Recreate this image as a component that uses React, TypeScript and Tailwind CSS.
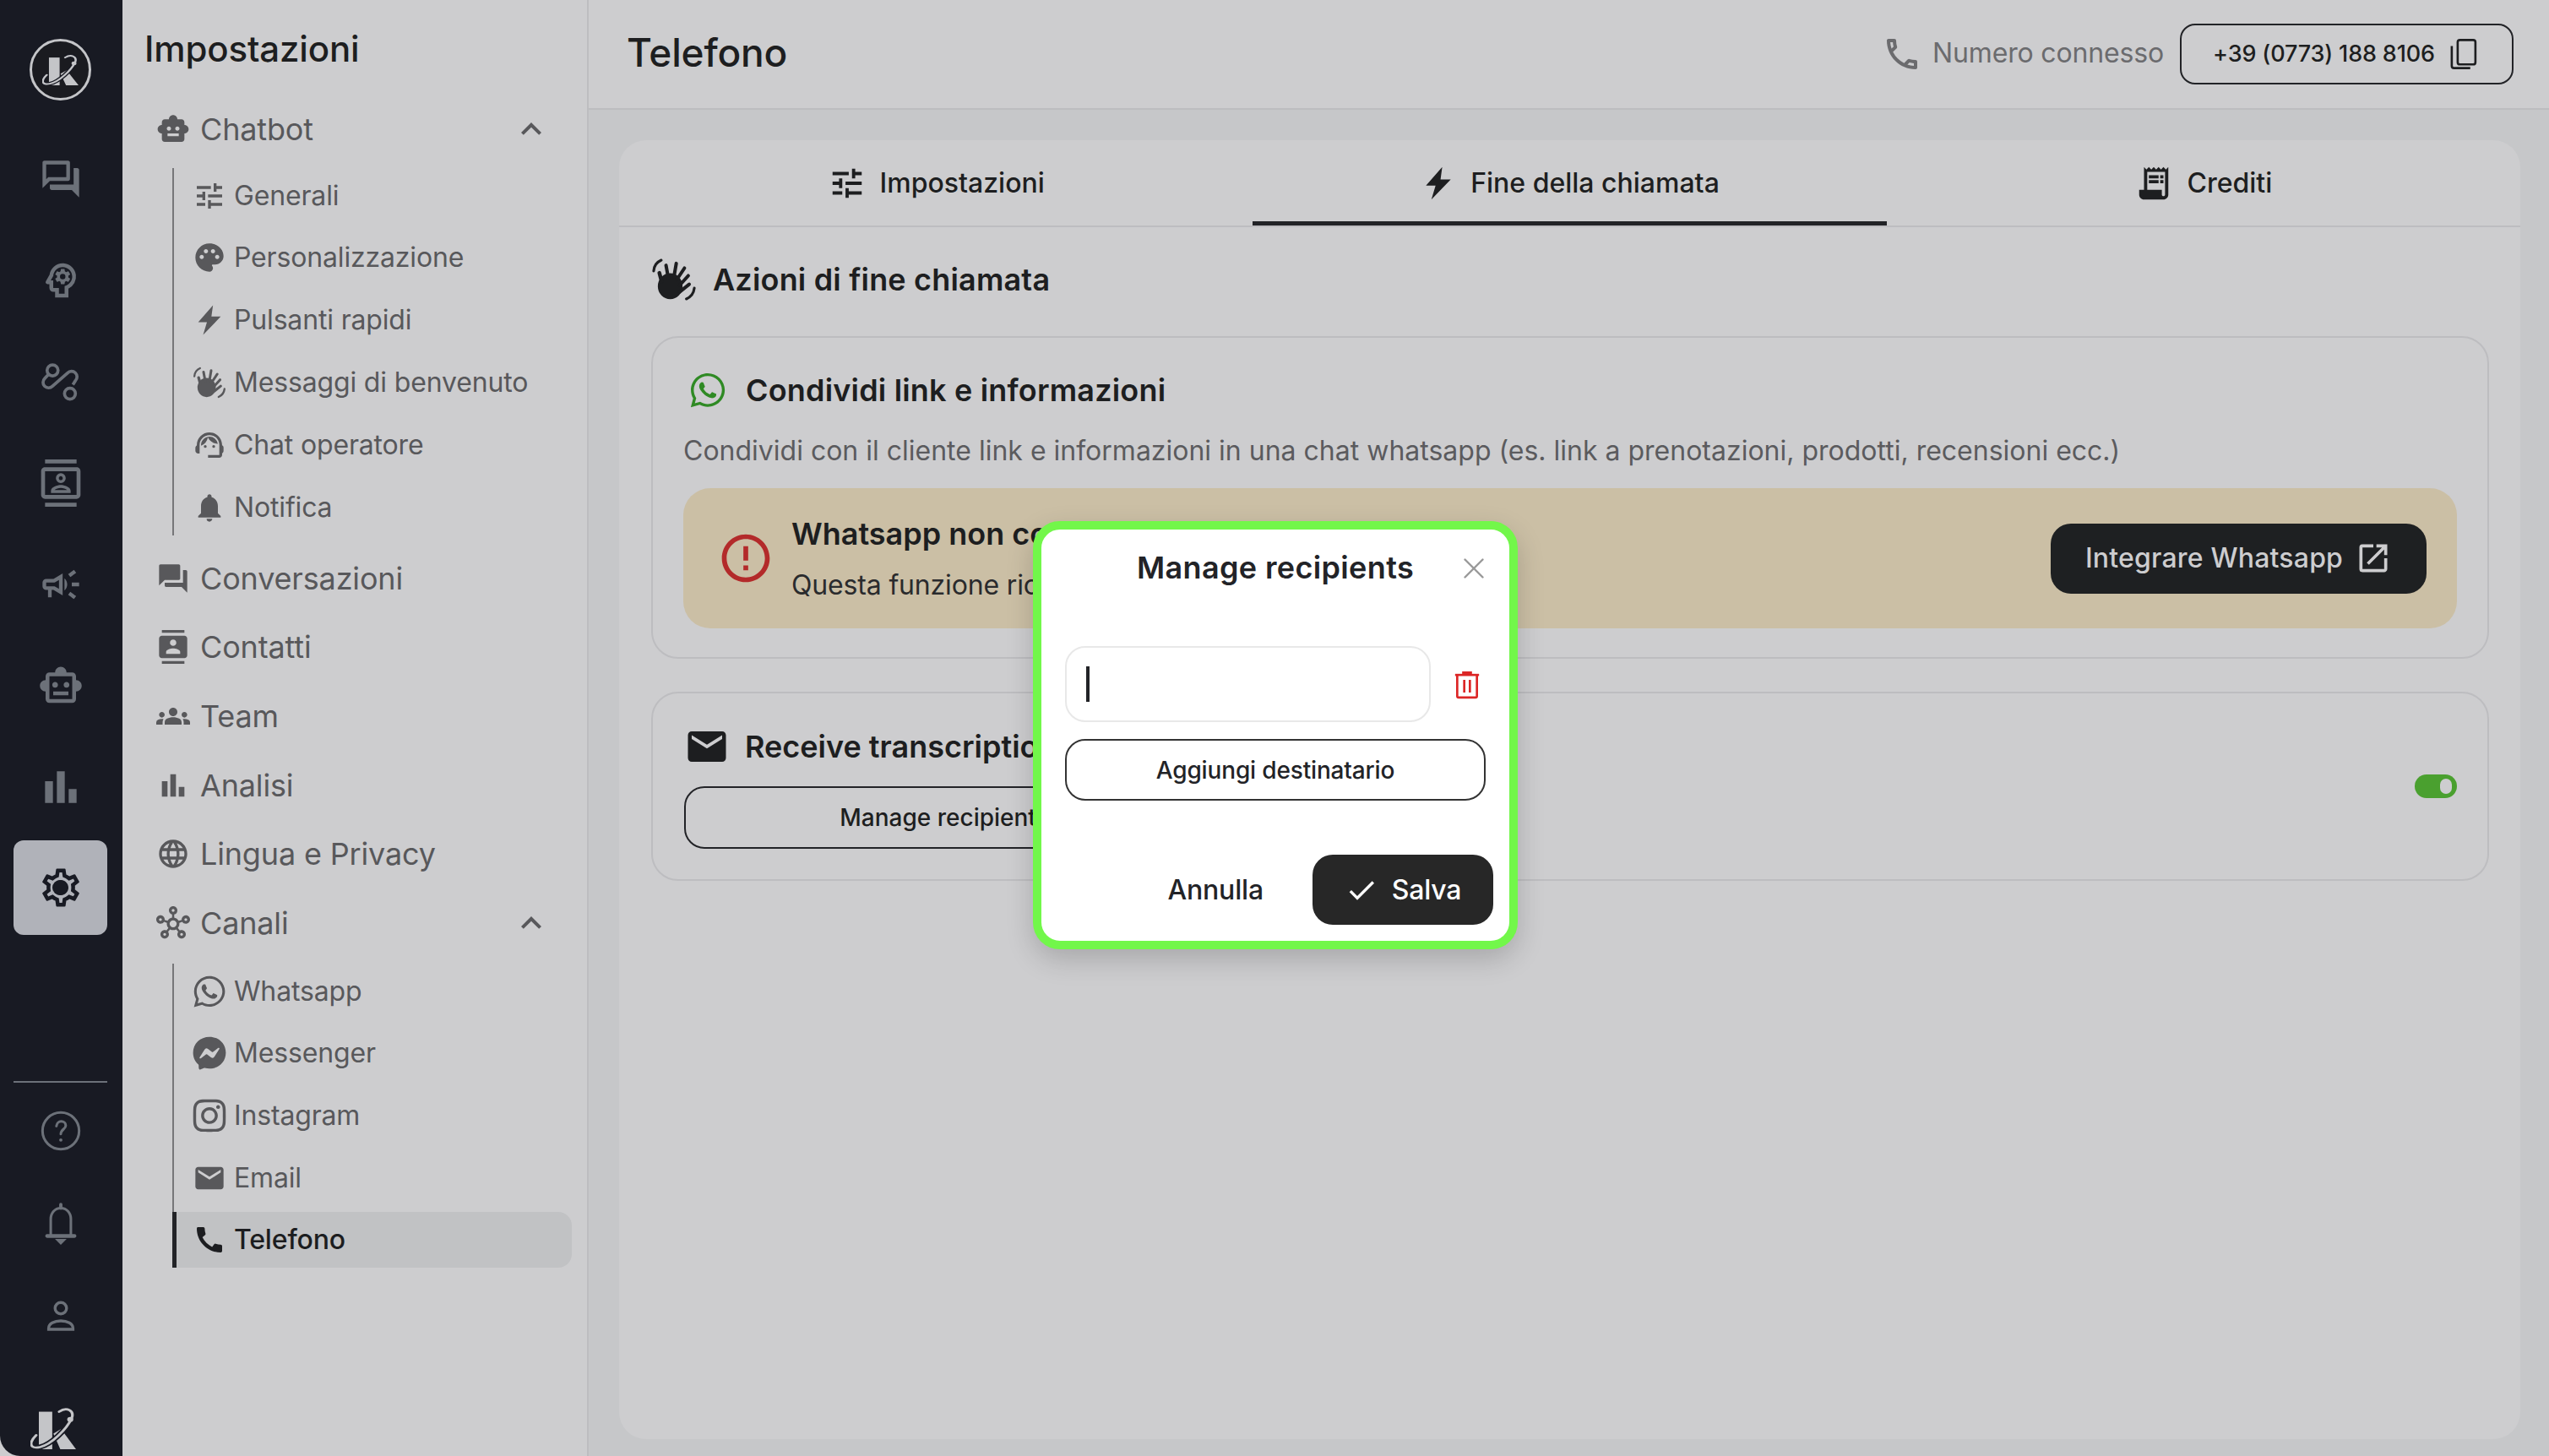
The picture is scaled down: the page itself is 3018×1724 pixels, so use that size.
import type { ReactNode } from "react";
import {
  MdBarChart,
  MdCall,
  MdCheck,
  MdContacts,
  MdEmail,
  MdErrorOutline,
  MdExpandLess,
  MdForum,
  MdGroups,
  MdLanguage,
  MdNotifications,
  MdOutlineCall,
  MdOutlineCampaign,
  MdOutlineContacts,
  MdOutlineForum,
  MdOutlineHub,
  MdOutlineOpenInNew,
  MdOutlinePsychology,
  MdOutlineSettings,
  MdOutlineSmartToy,
  MdOutlineSupportAgent,
  MdOutlineTune,
  MdPalette,
  MdReceiptLong,
  MdSmartToy,
} from "react-icons/md";
import { FaFacebookMessenger, FaInstagram, FaWhatsapp } from "react-icons/fa";
import { X } from "lucide-react";

const orbit = "M15 90C-5 115-2 135 25 128 55 120 95 70 108 35 115 12 95-2 75 15";

function KLogo({ className }: { className?: string }) {
  return (
    <svg viewBox="0 0 119 135" preserveAspectRatio="none" className={className} fill="none">
      <path d="M22 15H57V135H22z" fill="#c4c5c8" />
      <path d="M60 85 80 70 119 135H78z" fill="#c4c5c8" />
      <path d={orbit} stroke="#181a23" strokeWidth="16" />
      <path d={orbit} stroke="#c4c5c8" strokeWidth="7" strokeLinecap="round" />
      <circle cx="104" cy="40" r="8" fill="#c4c5c8" />
    </svg>
  );
}

function BoltIcon({ size }: { size: number }) {
  return (
    <svg viewBox="0 0 24 24" width={size} height={size} fill="currentColor">
      <path d="M14.5 1.500 4 13.500h6.200L7.500 22.500 20 9.500h-6.600z" />
    </svg>
  );
}

function WaveIcon({ size }: { size: number }) {
  return (
    <svg
      viewBox="0 0 24 24"
      width={size}
      height={size}
      fill="none"
      stroke="currentColor"
      strokeLinecap="round"
    >
      <path d="M1.300 7.500C1.500 5 3 2.800 5.300 1.800" strokeWidth="1.400" />
      <path d="M22.700 16.500c-.3 2.600-1.900 4.700-4.200 5.700" strokeWidth="1.400" />
      <ellipse cx="10" cy="15.500" rx="6.500" ry="6.800" fill="currentColor" stroke="none" />
      <path d="M5.500 13 4.300 8.500" strokeWidth="2" />
      <path d="M9 11 7.800 4.500" strokeWidth="1.800" />
      <path d="M12 10.500l1.200-7" strokeWidth="1.800" />
      <path d="M13.500 12l4-6" strokeWidth="1.800" />
      <path d="M15 15l4.500-5" strokeWidth="1.800" />
      <path d="M15 18.500l5-4" strokeWidth="1.800" />
    </svg>
  );
}

function PathIcon({ size }: { size: number }) {
  return (
    <svg
      viewBox="0 0 24 24"
      width={size}
      height={size}
      fill="none"
      stroke="currentColor"
      strokeWidth="1.700"
    >
      <circle cx="7.500" cy="5.800" r="3" />
      <circle cx="17" cy="18.500" r="3" />
      <path d="M5.300 8 3.200 10.200a3 3 0 0 0 4.200 4.300l8.300-7.300a3 3 0 0 1 4.300 4.200L18.600 13.600" />
    </svg>
  );
}

function HelpIcon({ size }: { size: number }) {
  return (
    <svg
      viewBox="0 0 24 24"
      width={size}
      height={size}
      fill="none"
      stroke="currentColor"
      strokeWidth="1.400"
      strokeLinecap="round"
    >
      <circle cx="12" cy="12" r="10" />
      <path d="M9.600 9.400c.2-1.600 1.300-2.600 2.600-2.600 1.400 0 2.500 1 2.500 2.300 0 2-2.600 2-2.700 4.600" />
      <circle cx="12" cy="17" r=".9" fill="currentColor" stroke="none" />
    </svg>
  );
}

function BellIcon({ size }: { size: number }) {
  return (
    <svg
      viewBox="0 0 24 24"
      width={size}
      height={size}
      fill="none"
      stroke="currentColor"
      strokeWidth="1.400"
      strokeLinecap="round"
    >
      <path d="M6.500 18.500v-9c0-3.400 2.300-6 5.500-6s5.500 2.600 5.500 6v9" />
      <path d="M4.500 18.700h15" strokeWidth="2" />
      <path d="M12 1.500v2" strokeWidth="1.800" />
      <path d="M10.500 21h3L12 22.500z" fill="currentColor" />
    </svg>
  );
}

function UserIcon({ size }: { size: number }) {
  return (
    <svg
      viewBox="0 0 24 24"
      width={size}
      height={size}
      fill="none"
      stroke="currentColor"
      strokeWidth="1.700"
    >
      <circle cx="12" cy="7" r="3.400" />
      <path d="M4.800 19.500v-.6c0-2.800 3.400-4.400 7.200-4.400s7.200 1.600 7.200 4.400v.6z" />
    </svg>
  );
}

function CopyIcon({ size }: { size: number }) {
  return (
    <svg
      viewBox="0 0 24 24"
      width={size}
      height={size}
      fill="none"
      stroke="currentColor"
      strokeWidth="1.500"
    >
      <rect x="8.500" y="2.500" width="12" height="16.500" rx="1.500" />
      <path d="M4.500 6.500v13.500a1.500 1.500 0 0 0 1.500 1.500h11" />
    </svg>
  );
}

function TrashIcon({ size }: { size: number }) {
  return (
    <svg
      viewBox="0 0 24 24"
      width={size}
      height={size}
      fill="none"
      stroke="currentColor"
      strokeWidth="1.600"
    >
      <path d="M3.500 5.500h17" />
      <path d="M8.500 3h7v2h-7z" fill="currentColor" stroke="none" />
      <path d="M5 5.500V20.500a1 1 0 0 0 1 1h12a1 1 0 0 0 1-1V5.500" />
      <path d="M10 9v9M14 9v9" />
    </svg>
  );
}

function NavIcon({ children, active }: { children: ReactNode; active?: boolean }) {
  return (
    <div
      className={
        active
          ? "relative flex h-[112px] w-[111px] shrink-0 items-center justify-center rounded-xl bg-[#b0b2b9] text-[#181a23]"
          : "flex h-[120px] w-[111px] shrink-0 items-center justify-center text-[#6c7179]"
      }
    >
      {children}
    </div>
  );
}

function FooterIcon({ children }: { children: ReactNode }) {
  return (
    <div className="flex h-[110px] w-[111px] shrink-0 items-center justify-center text-[#6c7179]">
      {children}
    </div>
  );
}

function Nav() {
  return (
    <nav className="flex w-[145px] shrink-0 flex-col items-center rounded-bl-[24px] bg-[#181a23] pt-[46px] pr-[2px]">
      <div className="mb-[33px] flex h-[73px] w-[73px] shrink-0 items-center justify-center rounded-full border-[3px] border-[#c4c5c8] bg-[#1a1b20]">
        <KLogo className="h-[37px] w-[43px]" />
      </div>
      <NavIcon><MdOutlineForum size={52} /></NavIcon>
      <NavIcon><MdOutlinePsychology size={54} /></NavIcon>
      <NavIcon><PathIcon size={52} /></NavIcon>
      <NavIcon><MdOutlineContacts size={56} /></NavIcon>
      <NavIcon><MdOutlineCampaign size={52} /></NavIcon>
      <NavIcon><MdOutlineSmartToy size={54} /></NavIcon>
      <NavIcon><MdBarChart size={56} /></NavIcon>
      <div className="mt-[3px]">
        <NavIcon active>
          <MdOutlineSettings size={54} />
          <span className="absolute top-[47px] left-[46px] h-[18px] w-[18px] rounded-full bg-[#181a23]" />
        </NavIcon>
      </div>
      <div className="mt-[173px] mb-[2px] h-[2px] w-[111px] shrink-0 bg-[#6c7179]" />
      <FooterIcon><HelpIcon size={52} /></FooterIcon>
      <FooterIcon><BellIcon size={52} /></FooterIcon>
      <FooterIcon><UserIcon size={48} /></FooterIcon>
      <KLogo className="mt-[52px] mr-[18px] h-[50px] w-[54px] shrink-0" />
    </nav>
  );
}

function MainRow({
  icon,
  label,
  chevron,
}: {
  icon: ReactNode;
  label: string;
  chevron?: boolean;
}) {
  return (
    <div className="flex h-[81.7px] items-center pl-[40px] text-[#58585b]">
      <span className="flex w-[40px] shrink-0 items-center justify-center">{icon}</span>
      <span className="ml-[12px] text-[36px]">{label}</span>
      {chevron && (
        <span className="ml-auto mr-[42px] flex">
          <MdExpandLess size={48} />
        </span>
      )}
    </div>
  );
}

function SubItem({
  icon,
  label,
  active,
}: {
  icon: ReactNode;
  label: string;
  active?: boolean;
}) {
  return (
    <div
      className={
        active
          ? "relative flex h-[66px] items-center rounded-r-2xl bg-[#c1c2c4] pl-[22px] font-medium text-[#1c1d20]"
          : "flex h-[66px] items-center pl-[22px] text-[#58585b]"
      }
    >
      {active && <span className="absolute top-0 bottom-0 left-[-2px] w-[5px] bg-[#222327]" />}
      <span className="flex w-[40px] shrink-0 items-center justify-center">{icon}</span>
      <span className="ml-[9px] text-[32px]">{label}</span>
    </div>
  );
}

function SettingsSidebar() {
  return (
    <aside className="w-[552px] shrink-0 border-r-2 border-[#bdbdc0] bg-[#cdcdcf]">
      <h2 className="flex h-[116px] items-center pb-[2px] pl-[26px] text-[42px] font-medium text-[#1d1e20]">
        Impostazioni
      </h2>
      <div className="-mt-[4px]">
        <MainRow icon={<MdSmartToy size={48} />} label="Chatbot" chevron />
      </div>
      <div className="mt-[5px] mr-[18px] ml-[59px] flex flex-col gap-[7.8px] border-l-2 border-[#767679]">
        <SubItem icon={<MdOutlineTune size={48} />} label="Generali" />
        <SubItem icon={<MdPalette size={46} />} label="Personalizzazione" />
        <SubItem icon={<BoltIcon size={42} />} label="Pulsanti rapidi" />
        <SubItem icon={<WaveIcon size={44} />} label="Messaggi di benvenuto" />
        <SubItem icon={<MdOutlineSupportAgent size={44} />} label="Chat operatore" />
        <SubItem icon={<MdNotifications size={48} />} label="Notifica" />
      </div>
      <div className="mt-[10px]">
        <MainRow icon={<MdForum size={48} />} label="Conversazioni" />
        <MainRow icon={<MdContacts size={48} />} label="Contatti" />
        <MainRow icon={<MdGroups size={50} />} label="Team" />
        <MainRow icon={<MdBarChart size={50} />} label="Analisi" />
        <MainRow icon={<MdLanguage size={48} />} label="Lingua e Privacy" />
        <MainRow icon={<MdOutlineHub size={52} />} label="Canali" chevron />
      </div>
      <div className="mt-[7px] mr-[18px] ml-[59px] flex flex-col gap-[7.6px] border-l-2 border-[#767679]">
        <SubItem icon={<FaWhatsapp size={42} />} label="Whatsapp" />
        <SubItem icon={<FaFacebookMessenger size={40} />} label="Messenger" />
        <SubItem icon={<FaInstagram size={44} />} label="Instagram" />
        <SubItem icon={<MdEmail size={46} />} label="Email" />
        <SubItem icon={<MdCall size={46} />} label="Telefono" active />
      </div>
    </aside>
  );
}

function TopBar() {
  return (
    <header className="flex h-[130px] shrink-0 items-center border-b-2 border-[#bdbdc0] bg-[#cdcdcf] pr-[42px] pl-[45px]">
      <h1 className="pb-[3px] text-[46px] font-medium text-[#1d1e20]">Telefono</h1>
      <div className="ml-auto flex items-center text-[#6b6b6e]">
        <MdOutlineCall size={48} />
        <span className="ml-[12px] pb-[2px] text-[32px]">Numero connesso</span>
      </div>
      <button className="ml-[19px] flex h-[72px] w-[395px] items-center justify-center gap-[12px] rounded-[18px] border-2 border-[#222327] text-[27px] font-medium text-[#1d1e20]">
        +39 (0773) 188 8106
        <CopyIcon size={42} />
      </button>
    </header>
  );
}

function Tab({
  icon,
  label,
  active,
}: {
  icon: ReactNode;
  label: string;
  active?: boolean;
}) {
  return (
    <div
      className={
        active
          ? "flex h-full flex-1 items-center justify-center gap-[16px] border-b-[5px] border-[#222327] pt-[5px] text-[32px] font-medium tracking-normal text-[#1d1e20]"
          : "flex h-full flex-1 items-center justify-center gap-[16px] text-[32px] font-medium tracking-normal text-[#1d1e20]"
      }
    >
      {icon}
      {label}
    </div>
  );
}

function SettingsCard() {
  return (
    <div className="mt-[36px] mr-[34px] mb-[20px] ml-[36px] flex-1 rounded-[32px] bg-[#cdcdcf]">
      <div className="flex h-[103px] items-stretch border-b-2 border-[#bdbdc0]">
        <Tab icon={<MdOutlineTune size={46} />} label="Impostazioni" />
        <Tab icon={<BoltIcon size={44} />} label="Fine della chiamata" active />
        <Tab icon={<MdReceiptLong size={46} />} label="Crediti" />
      </div>
      <div className="pr-[37px] pl-[38px]">
        <div className="flex h-[124px] items-center text-[#1d1e20]">
          <WaveIcon size={54} />
          <h3 className="ml-[19px] text-[36px] font-semibold tracking-[0.005em]">
            Azioni di fine chiamata
          </h3>
        </div>
        <section className="mt-[5px] h-[382px] rounded-[32px] border-2 border-[#bdbdc0] px-[36px] pt-[26px]">
          <div className="flex h-[72px] items-center text-[#1d1e20]">
            <FaWhatsapp size={46} className="ml-[6px] text-[#2f8a24]" />
            <h4 className="ml-[22px] text-[36px] font-semibold tracking-[0.005em]">
              Condividi link e informazioni
            </h4>
          </div>
          <p className="mt-[12px] text-[32px] tracking-normal text-[#5b5b5e]">
            Condividi con il cliente link e informazioni in una chat whatsapp (es. link a
            prenotazioni, prodotti, recensioni ecc.)
          </p>
          <div className="mt-[20px] flex h-[166px] items-center rounded-[32px] bg-[#cbbfa5] pr-[36px] pl-[40px]">
            <MdErrorOutline size={68} className="text-[#b32a2a]" />
            <div className="ml-[20px]">
              <p className="text-[36px] font-semibold tracking-normal text-[#1d1e20]">
                Whatsapp non connesso
              </p>
              <p className="mt-[10px] text-[32px] text-[#2a2b2d]">
                Questa funzione richiede un account Whatsapp
              </p>
            </div>
            <button className="ml-auto flex h-[83px] w-[445px] items-center justify-center gap-[14px] rounded-[24px] bg-[#1e2022] text-[32px] font-medium tracking-[0.006em] text-[#cdcdcf]">
              Integrare Whatsapp
              <MdOutlineOpenInNew size={44} />
            </button>
          </div>
        </section>
        <section className="relative mt-[39px] h-[224px] rounded-[32px] border-2 border-[#bdbdc0] px-[38px] pt-[28px]">
          <div className="flex h-[70px] items-center text-[#1d1e20]">
            <MdEmail size={54} className="ml-[-1px]" />
            <h4 className="ml-[18px] text-[36px] font-semibold tracking-normal">
              Receive transcriptions by email
            </h4>
          </div>
          <button className="mt-[12px] -ml-[1px] flex h-[74px] w-[616px] items-center justify-center rounded-[24px] border-2 border-[#222327] text-[28px] font-medium tracking-normal text-[#1d1e20]">
            Manage recipients
          </button>
          <span className="absolute top-[96px] right-[36px] flex h-[28px] w-[50px] items-center justify-end rounded-full bg-[#4aa02f] pr-[6px]">
            <span className="h-[18px] w-[14px] rounded-full bg-[#cdcdcf]" />
          </span>
        </section>
      </div>
    </div>
  );
}

function RecipientsModal() {
  return (
    <div className="absolute top-[617px] left-[1223px] h-[507px] w-[574px] rounded-[32px] border-[10px] border-[#72f74a] bg-white pl-[28px] shadow-[0_12px_32px_rgba(0,0,0,0.18)]">
      <div className="relative flex h-[90px] items-center justify-center pr-[28px]">
        <h3 className="text-[36px] font-semibold tracking-[0.01em] text-[#222327]">
          Manage recipients
        </h3>
        <X size={42} strokeWidth={1.4} className="absolute top-[25px] right-[21px] text-[#999999]" />
      </div>
      <div className="mt-[48px] flex items-center">
        <div className="flex h-[90px] w-[433px] items-center rounded-[24px] border-2 border-[#e8e8e8] pl-[23px]">
          <span className="h-[42px] w-[4px] bg-[#222327]" />
        </div>
        <span className="ml-[23px] flex text-[#dc2626]">
          <TrashIcon size={40} />
        </span>
      </div>
      <button className="mt-[20px] flex h-[73px] w-[498px] items-center justify-center rounded-[24px] border-2 border-[#333333] text-[28px] font-medium text-[#222327]">
        Aggiungi destinatario
      </button>
      <div className="mt-[64px] flex items-center justify-end pr-[19px]">
        <span className="text-[32px] font-medium text-[#222327]">Annulla</span>
        <button className="ml-[58px] flex h-[83px] w-[214px] items-center justify-center gap-[16px] rounded-[24px] bg-[#272727] text-[32px] font-medium text-white">
          <MdCheck size={40} />
          Salva
        </button>
      </div>
    </div>
  );
}

export default function App() {
  return (
    <div className="relative flex h-[1724px] w-[3018px] overflow-hidden bg-[#cdcdcf] font-['Inter',sans-serif] tracking-[-0.01em]">
      <Nav />
      <SettingsSidebar />
      <main className="flex min-w-0 flex-1 flex-col bg-[#c6c7c9]">
        <TopBar />
        <SettingsCard />
      </main>
      <RecipientsModal />
    </div>
  );
}
